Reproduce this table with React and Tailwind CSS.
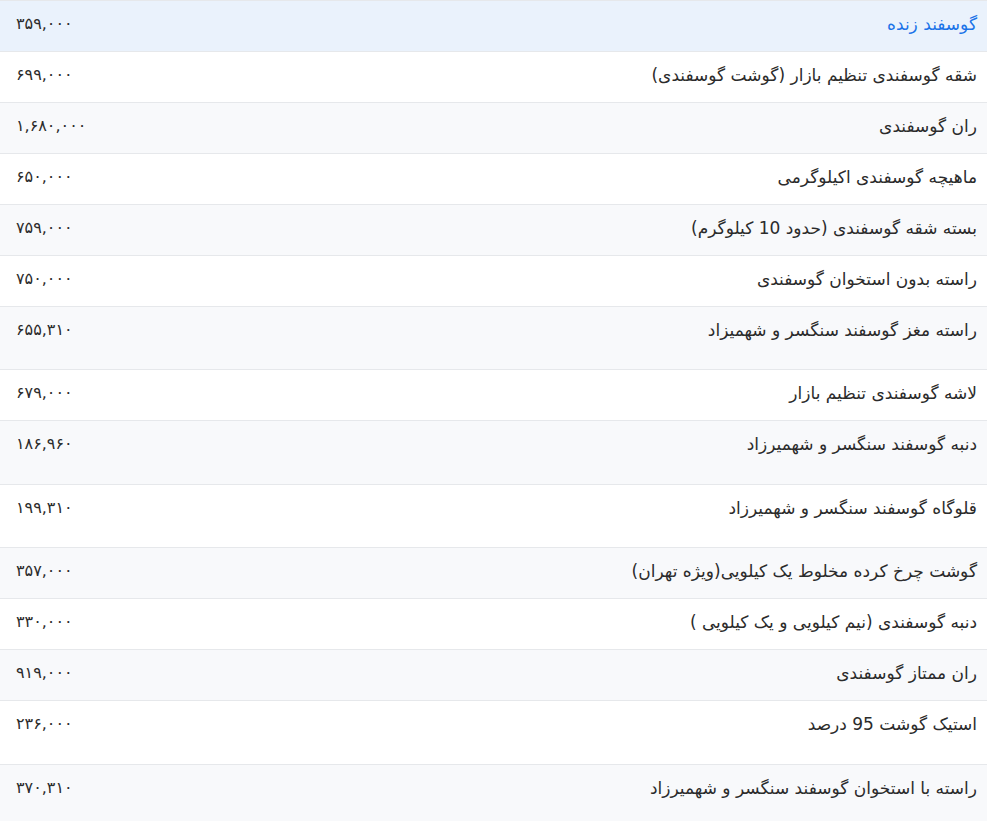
import React from "react";

const rows = [
  { name: "گوسفند زنده", price: "۳۵۹,۰۰۰", active: true },
  { name: "شقه گوسفندی تنظیم بازار (گوشت گوسفندی)", price: "۶۹۹,۰۰۰" },
  { name: "ران گوسفندی", price: "۱,۶۸۰,۰۰۰" },
  { name: "ماهیچه گوسفندی اکیلوگرمی", price: "۶۵۰,۰۰۰" },
  { name: "بسته شقه گوسفندی (حدود 10 کیلوگرم)", price: "۷۵۹,۰۰۰" },
  { name: "راسته بدون استخوان گوسفندی", price: "۷۵۰,۰۰۰" },
  { name: "راسته مغز گوسفند سنگسر و شهمیزاد", price: "۶۵۵,۳۱۰", h: "h-[63px]" },
  { name: "لاشه گوسفندی تنظیم بازار", price: "۶۷۹,۰۰۰" },
  { name: "دنبه گوسفند سنگسر و شهمیرزاد", price: "۱۸۶,۹۶۰", h: "h-[64px]" },
  { name: "قلوگاه گوسفند سنگسر و شهمیرزاد", price: "۱۹۹,۳۱۰", h: "h-[63px]" },
  { name: "گوشت چرخ کرده مخلوط یک کیلویی(ویژه تهران)", price: "۳۵۷,۰۰۰" },
  { name: "دنبه گوسفندی (نیم کیلویی و یک کیلویی )", price: "۳۳۰,۰۰۰" },
  { name: "ران ممتاز گوسفندی", price: "۹۱۹,۰۰۰" },
  { name: "استیک گوشت 95 درصد", price: "۲۳۶,۰۰۰", h: "h-[64px]" },
  { name: "راسته با استخوان گوسفند سنگسر و شهمیرزاد", price: "۳۷۰,۳۱۰", h: "h-[64px]" },
];

export default function App() {
  return (
    <div
      dir="rtl"
      className="w-[987px] h-[821px] overflow-hidden bg-white text-[#2b2b2b] text-[17px] border-t border-[#e6e8eb]"
      style={{ fontFamily: '"DejaVu Sans", "Noto Sans", sans-serif' }}
    >
      {rows.map((r, i) => {
        const bg = r.active ? "bg-[#eaf2fc]" : i % 2 === 0 ? "bg-[#f8f9fb]" : "bg-white";
        return (
          <div
            key={i}
            className={`flex justify-between items-start border-b border-[#e6e8eb] pt-[11px] pr-[10px] pl-[16px] ${bg} ${r.h || "h-[51px]"}`}
          >
            <span className={`leading-[24px] ${r.active ? "text-[#1a73e8]" : ""}`}>{r.name}</span>
            <span className="leading-[24px] text-[16px]">{r.price}</span>
          </div>
        );
      })}
    </div>
  );
}
